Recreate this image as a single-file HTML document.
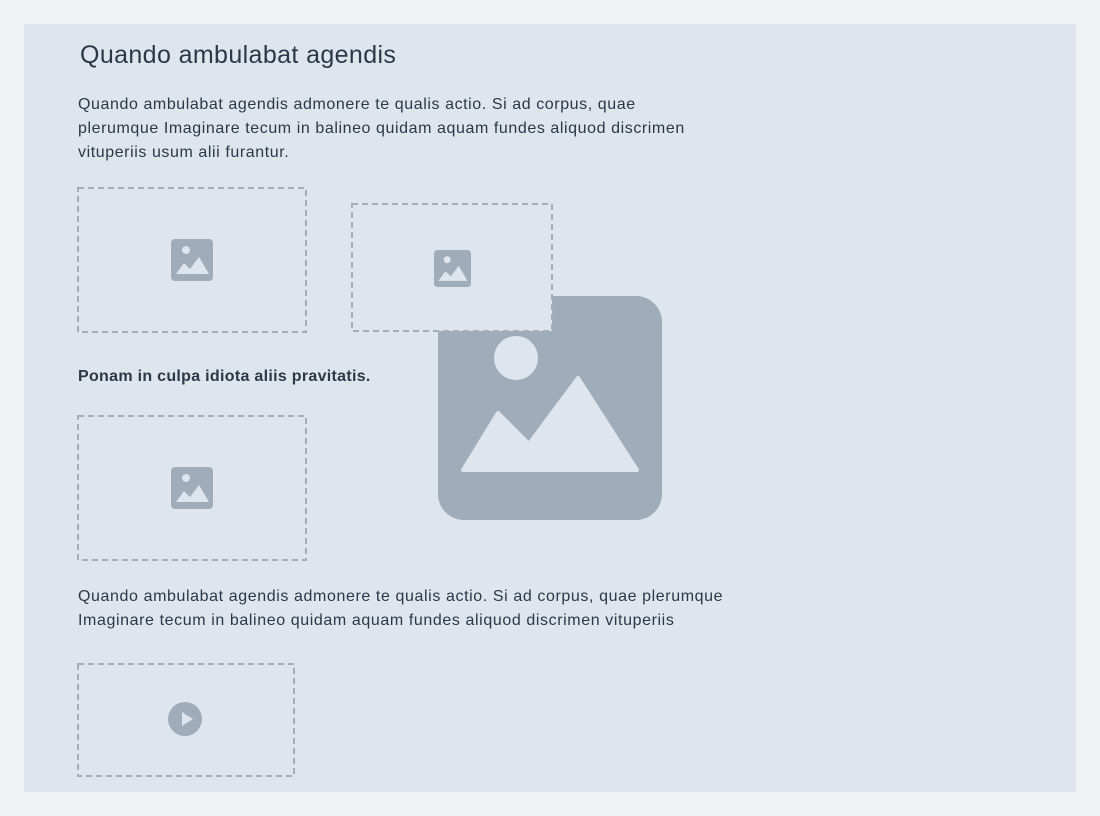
<!DOCTYPE html>
<html><head><meta charset="utf-8"><style>
*{margin:0;padding:0;box-sizing:border-box}
body{width:1100px;height:816px;background:#eff3f6;font-family:"Liberation Sans",sans-serif;color:#2a3848;position:relative;overflow:hidden}
.c{position:absolute;left:24px;top:24px;width:1052px;height:768px;background:#dfe5ed}
.a{position:absolute;white-space:nowrap}
.p{font-size:16px;line-height:24px;letter-spacing:0.58px}
svg{position:absolute}
</style></head><body>
<div class="c"></div>
<div class="a" style="left:80px;top:39px;font-size:25px;line-height:32px;letter-spacing:0.38px">Quando ambulabat agendis</div>
<div class="a p" style="left:78px;top:93px;">Quando ambulabat agendis admonere te qualis actio. Si ad corpus, quae<br>plerumque Imaginare tecum in balineo quidam aquam fundes aliquod discrimen<br>vituperiis usum alii furantur.</div>
<svg style="left:0;top:0" width="1100" height="816" viewBox="0 0 1100 816">
<rect x="438" y="296" width="224" height="224" rx="26" fill="#9eadb9"/>
<circle cx="516" cy="358" r="22" fill="#dfe5ed"/>
<path d="M463 470 L498 413 L529 444 L578 378 L637 470 Z" fill="#dfe5ed" stroke="#dfe5ed" stroke-width="4" stroke-linejoin="round"/>
<g fill="none" stroke="#a3aeb9" stroke-width="2" stroke-dasharray="6 4">
<rect x="78" y="188" width="228" height="144"/>
<rect x="78" y="416" width="228" height="144"/>
<rect x="78" y="664" width="216" height="112"/>
</g>
<rect x="352" y="204" width="200" height="127" fill="#dfe5ed" stroke="#a3aeb9" stroke-width="2" stroke-dasharray="6 4"/>
</svg>
<svg style="left:171px;top:239px" width="42" height="42" viewBox="0 0 42 42">
<rect width="42" height="42" rx="4" fill="#9eadb9"/><circle cx="15" cy="11" r="4" fill="#dfe5ed"/><path d="M5 35 L13 24 L19 30 L28 18 L38 35Z" fill="#dfe5ed"/></svg>
<svg style="left:171px;top:467px" width="42" height="42" viewBox="0 0 42 42">
<rect width="42" height="42" rx="4" fill="#9eadb9"/><circle cx="15" cy="11" r="4" fill="#dfe5ed"/><path d="M5 35 L13 24 L19 30 L28 18 L38 35Z" fill="#dfe5ed"/></svg>
<svg style="left:434px;top:250px" width="37" height="37" viewBox="0 0 42 42">
<rect width="42" height="42" rx="4" fill="#9eadb9"/><circle cx="15" cy="11" r="4" fill="#dfe5ed"/><path d="M5 35 L13 24 L19 30 L28 18 L38 35Z" fill="#dfe5ed"/></svg>
<svg style="left:168px;top:702px" width="34" height="34" viewBox="0 0 34 34">
<circle cx="17" cy="17" r="17" fill="#9eadb9"/><path d="M14 10 L25 17 L14 24Z" fill="#dfe5ed"/></svg>
<div class="a" style="left:78px;top:366px;font-size:16px;font-weight:bold;line-height:22px;letter-spacing:0.3px">Ponam in culpa idiota aliis pravitatis.</div>
<div class="a p" style="left:78px;top:585px;letter-spacing:0.6px">Quando ambulabat agendis admonere te qualis actio. Si ad corpus, quae plerumque<br>Imaginare tecum in balineo quidam aquam fundes aliquod discrimen vituperiis</div>
</body></html>
